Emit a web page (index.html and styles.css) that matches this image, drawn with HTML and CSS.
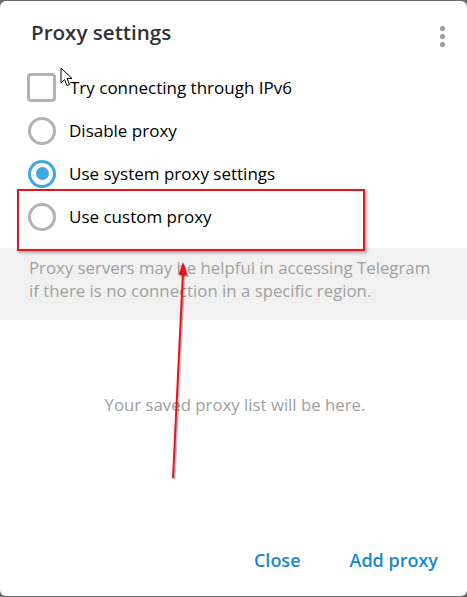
FILE: index.html
```html
<!DOCTYPE html>
<html>
<head>
<meta charset="utf-8">
<link rel="stylesheet" href="styles.css">
</head>
<body>
<div class="dialog">
  <div class="header">
    <div class="title">Proxy settings</div>
    <div class="menu"><span></span><span></span><span></span></div>
  </div>
  <div class="options">
    <div class="row"><span class="check"></span><span class="label">Try connecting through IPv6</span></div>
    <div class="row"><span class="radio"></span><span class="label">Disable proxy</span></div>
    <div class="row"><span class="radio on"></span><span class="label">Use system proxy settings</span></div>
    <div class="row"><span class="radio"></span><span class="label">Use custom proxy</span></div>
  </div>
  <div class="about">Proxy servers may be helpful in accessing Telegram<br>if there is no connection in a specific region.</div>
  <div class="empty">Your saved proxy list will be here.</div>
  <div class="footer">
    <span class="btn">Close</span>
    <span class="btn">Add proxy</span>
  </div>

  <div class="mark"></div>
  <svg class="arrow" width="40" height="230" viewBox="0 0 40 230">
    <g transform="translate(1.5,1.5)" stroke="rgba(0,0,0,0.25)" fill="rgba(0,0,0,0.25)">
      <line x1="13" y1="218" x2="23" y2="12" stroke-width="2"/>
      <polygon points="23,2 18.5,15 27.5,15.5" stroke="none"/>
    </g>
    <line x1="13" y1="218" x2="23" y2="12" stroke="#e8141c" stroke-width="2"/>
    <polygon points="23,2 18.5,15 27.5,15.5" fill="#e8141c"/>
  </svg>
  <svg class="cursor" width="14" height="22" viewBox="0 0 14 22">
    <path d="M1 1 L1 16 L4.5 12.5 L7 18.5 L9.5 17.5 L7 11.5 L12 11.5 Z" fill="#fff" stroke="#000" stroke-width="1" stroke-linejoin="miter"/>
  </svg>
</div>
</body>
</html>
```
FILE: styles.css
```css
html, body {
  margin: 0;
  padding: 0;
}
body {
  background: #6b6b6b;
  width: 467px;
  height: 597px;
  overflow: hidden;
  font-family: "Open Sans", "Noto Sans", sans-serif;
}
.dialog {
  position: relative;
  margin-top: 1px;
  width: 467px;
  height: 595px;
  background: #fff;
  border-radius: 6px;
  display: flex;
  flex-direction: column;
}
.header {
  height: 65px;
  box-sizing: border-box;
  padding: 17px 22px 0 31px;
  display: flex;
  justify-content: space-between;
  align-items: flex-start;
}
.title {
  font-size: 20.6px;
  line-height: 28px;
  font-weight: 600;
  color: #333;
}
.menu {
  display: flex;
  flex-direction: column;
  gap: 3px;
  padding-top: 8px;
}
.menu span {
  width: 5px;
  height: 5px;
  border-radius: 50%;
  background: #999;
}
.options {
  display: flex;
  flex-direction: column;
  padding-left: 28px;
}
.row {
  height: 43px;
  display: flex;
  align-items: center;
  gap: 13px;
}
.label {
  font-size: 17px;
  line-height: 43px;
  color: #000;
}
.check {
  width: 29px;
  height: 29px;
  box-sizing: border-box;
  border: 3px solid #b3b3b3;
  border-radius: 4px;
  margin-left: -1px;
  margin-right: 1px;
}
.radio {
  width: 28px;
  height: 28px;
  box-sizing: border-box;
  border: 3px solid #b3b3b3;
  border-radius: 50%;
  display: flex;
  align-items: center;
  justify-content: center;
}
.radio.on {
  border-color: #40a7e3;
}
.radio.on::after {
  content: "";
  width: 13px;
  height: 13px;
  border-radius: 50%;
  background: #40a7e3;
}
.about {
  margin-top: 10px;
  height: 72px;
  box-sizing: border-box;
  padding: 8px 0 0 29px;
  background: #f1f1f1;
  color: #a0a0a0;
  font-size: 16.8px;
  line-height: 23px;
}
.empty {
  height: 216px;
  box-sizing: border-box;
  padding-top: 73px;
  text-align: center;
  color: #a0a0a0;
  font-size: 16.8px;
  line-height: 23px;
  padding-left: 3px;
}
.footer {
  flex: 1;
  display: flex;
  justify-content: flex-end;
  gap: 49px;
  padding: 12px 29px 0 0;
}
.btn {
  font-size: 18px;
  line-height: 24px;
  font-weight: 600;
  color: #168acd;
}
.mark {
  position: absolute;
  left: 17px;
  top: 188px;
  width: 348px;
  height: 62px;
  box-sizing: border-box;
  border: 2px solid #e8141c;
  box-shadow: 2px 2px 3px rgba(0, 0, 0, 0.3);
}
.arrow {
  position: absolute;
  left: 160px;
  top: 259px;
}
.cursor {
  position: absolute;
  left: 60px;
  top: 66px;
}
```
